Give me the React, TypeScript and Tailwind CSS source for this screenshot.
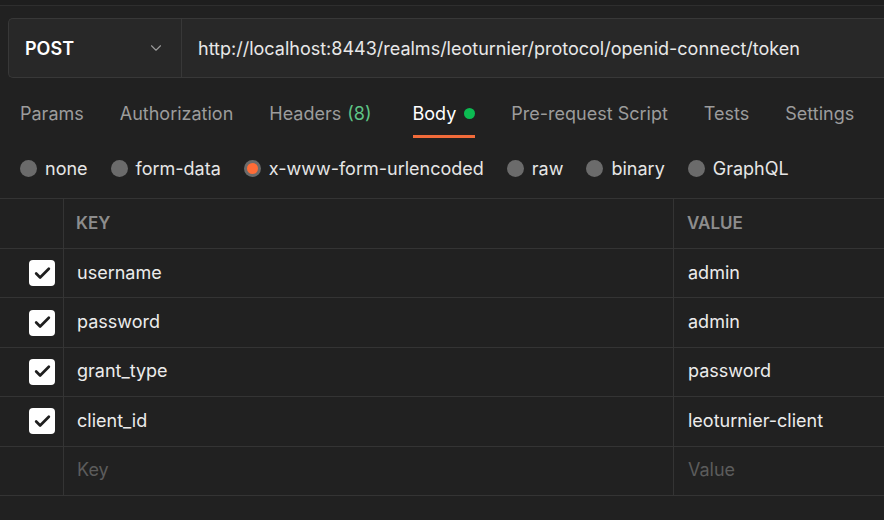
import { ChevronDown, Check } from 'lucide-react';

const rows = [
  { key: 'username', value: 'admin' },
  { key: 'password', value: 'admin' },
  { key: 'grant_type', value: 'password' },
  { key: 'client_id', value: 'leoturnier-client' },
];

const radios = ['none', 'form-data', 'x-www-form-urlencoded', 'raw', 'binary', 'GraphQL'];

export default function App() {
  return (
    <div
      className="w-[884px] h-[520px] bg-[#212121] overflow-hidden text-[#e6e6e6]"
      style={{ fontFamily: 'Inter, "Noto Sans", sans-serif' }}
    >
      <div className="h-[6px] border-b border-[#2e2e2e] bg-[#1e1e1e]" />

      {/* request bar */}
      <div className="pl-[8px] pt-[12px]">
        <div className="flex h-[60px] rounded-l-[5px] border border-r-0 border-[#383838] bg-[#282828]">
          <div className="flex w-[173px] items-center justify-between border-r border-[#383838] pl-[16px] pr-[16px]">
            <span className="text-[18px] font-semibold text-white">POST</span>
            <ChevronDown size={18} strokeWidth={1.5} className="text-[#9a9a9a]" />
          </div>
          <div className="flex items-center pl-[16px] text-[18px] text-[#e8e8e8]">
            http://localhost:8443/realms/leoturnier/protocol/openid-connect/token
          </div>
        </div>
      </div>

      {/* tabs */}
      <div className="flex h-[60px] items-stretch gap-[36px] pl-[20px] text-[18px] text-[#9c9c9c]">
        <div className="flex items-center pt-[16px] pb-[6px]">Params</div>
        <div className="flex items-center pt-[16px] pb-[6px]">Authorization</div>
        <div className="flex items-center pt-[16px] pb-[6px]">
          Headers <span className="ml-[6px] text-[#5ec486]">(8)</span>
        </div>
        <div className="relative ml-[5px] flex items-center pt-[16px] pb-[6px] text-white">
          Body
          <span className="ml-[8px] h-[11px] w-[11px] rounded-full bg-[#0cbb52]" />
          <span className="absolute bottom-[0px] left-0 right-0 h-[3px] bg-[#f26b3a]" />
        </div>
        <div className="flex items-center pt-[16px] pb-[6px]">Pre-request Script</div>
        <div className="flex items-center pt-[16px] pb-[6px]">Tests</div>
        <div className="flex items-center pt-[16px] pb-[6px]">Settings</div>
      </div>

      {/* body type radios */}
      <div className="flex h-[60px] items-center gap-[23px] pl-[20px] text-[18px] text-[#e6e6e6]">
        {radios.map((r) => (
          <div key={r} className="flex items-center gap-[8px]">
            {r === 'x-www-form-urlencoded' ? (
              <span className="flex h-[17px] w-[17px] items-center justify-center rounded-full bg-[#6b6b6b]">
                <span className="h-[11px] w-[11px] rounded-full bg-[#ff6c37]" />
              </span>
            ) : (
              <span className="h-[17px] w-[17px] rounded-full bg-[#6b6b6b]" />
            )}
            <span>{r}</span>
          </div>
        ))}
      </div>

      {/* table */}
      <div className="border-t border-[#343434]">
        <div className="flex h-[50px] border-b border-[#343434]">
          <div className="w-[64px] border-r border-[#343434]" />
          <div className="flex w-[610px] items-center border-r border-[#343434] pl-[12px] text-[17px] font-semibold text-[#8d8d8d]">
            KEY
          </div>
          <div className="flex flex-1 items-center pl-[13px] text-[17px] font-semibold text-[#8d8d8d]">
            VALUE
          </div>
        </div>
        {rows.map((row) => (
          <div key={row.key} className="flex h-[49.4px] border-b border-[#343434]">
            <div className="flex w-[64px] items-center justify-end border-r border-[#343434] pr-[8px]">
              <span className="flex h-[26px] w-[26px] items-center justify-center rounded-[4px] bg-white">
                <Check size={19} strokeWidth={3.4} className="text-[#1e1e1e]" />
              </span>
            </div>
            <div className="flex w-[610px] items-center border-r border-[#343434] pb-[2px] pl-[13px] text-[18px] text-[#ececec]">
              {row.key}
            </div>
            <div className="flex flex-1 items-center pb-[2px] pl-[14px] text-[18px] text-[#ececec]">{row.value}</div>
          </div>
        ))}
        <div className="flex h-[49.4px] border-b border-[#343434]">
          <div className="w-[64px] border-r border-[#343434]" />
          <div className="flex w-[610px] items-center border-r border-[#343434] pb-[2px] pl-[13px] text-[18px] text-[#5c5c5c]">
            Key
          </div>
          <div className="flex flex-1 items-center pb-[2px] pl-[14px] text-[18px] text-[#5c5c5c]">Value</div>
        </div>
      </div>
    </div>
  );
}
